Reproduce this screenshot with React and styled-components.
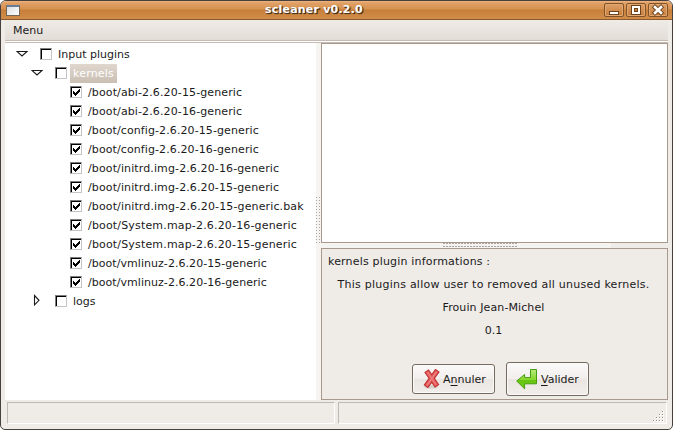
import React from "react";
import styled, { createGlobalStyle } from "styled-components";

const Global = createGlobalStyle`
  * { box-sizing: border-box; }
  html, body { margin: 0; padding: 0; background: #fff; overflow: hidden; }
  body { font: 11px/19px "DejaVu Sans", sans-serif; color: #1a1a1a; }
`;

const Window = styled.div`
  width: 673px;
  height: 430px;
  display: flex;
  flex-direction: column;
  overflow: hidden;
  border: 1px solid #47403c;
  border-radius: 6px 6px 5px 5px;
  background: #efebe7;
`;

const TitleBar = styled.header`
  flex: none;
  height: 19px;
  display: grid;
  grid-template-columns: 66px 1fr 66px;
  align-items: center;
  padding: 0 4px 0 5px;
  border-bottom: 1px solid #8c5a2e;
  background: linear-gradient(#edb682 0, #e0a066 2px, #d6914f 8px, #c77f3a 9px, #cf8c48 17px);
`;

const AppIcon = styled.span`
  width: 14px;
  height: 11px;
  border: 1px solid #75674f;
  border-top: 2px solid #6b7c96;
  background: linear-gradient(135deg, #d9dde0, #fff);
`;

const Title = styled.h1`
  margin: 0;
  font-size: 11px;
  line-height: 18px;
  font-weight: bold;
  letter-spacing: 0.2px;
  text-align: center;
  white-space: nowrap;
  color: #fff;
  text-shadow: 1px 1px 0 #4d3218, 1px 1px 1px #3c2a18;
  padding-right: 46px;
`;

const WindowButtons = styled.div`
  display: flex;
  gap: 2px;
  justify-content: flex-end;
`;

const WindowButton = styled.button`
  width: 20px;
  height: 14px;
  padding: 0;
  display: grid;
  place-items: center;
  border: 1px solid #835225;
  border-radius: 2px;
  background: linear-gradient(#dda069, #c67d39);
  box-shadow: inset 0 0 0 1px #e0a873;
`;

const MenuBar = styled.nav`
  flex: none;
  height: 23px;
  margin: 0 4px;
  padding-left: 8px;
  line-height: 21px;
  background: linear-gradient(#efebe7, #e3ddd8 20px, #c6bcb3 20px, #c6bcb3 21px, #fff 21px, #fff 22px, #c6bcb3 22px);
`;

const Text = styled.span`
  white-space: pre;
  letter-spacing: ${(p) => p.$spacing || 0}px;
`;

const Body = styled.main`
  flex: none;
  height: 357px;
  margin: 0 4px;
  display: grid;
  grid-template-columns: 311px 5px 347px;
`;

const Tree = styled.section`
  background: #fff;
  padding-top: 2px;
`;

const TreeRow = styled.div`
  height: 19px;
  display: flex;
  align-items: flex-start;
  padding-left: ${(p) => 11 + p.$level * 15}px;
`;

const ArrowSlot = styled.span`
  width: 24px;
  height: 19px;
  padding-top: ${(p) => (p.$open ? 4 : 2)}px;
  line-height: 0;
`;

const Box = styled.span`
  width: 12px;
  height: 12px;
  flex: none;
  margin-top: 3px;
  padding: 1px 0 0 1px;
  border: 1px solid #c4c4c4;
  border-top-color: #7d7d7d;
  border-left-color: #7d7d7d;
  background: #fff;
  box-shadow: inset 1px 1px 0 #000;
  line-height: 0;
`;

const RowLabel = styled.span`
  height: 19px;
  margin-left: 3px;
  padding: 0 3px;
  white-space: pre;
  letter-spacing: ${(p) => p.$spacing || 0}px;
  color: ${(p) => (p.$selected ? "#fff" : "#1a1a1a")};
  background: ${(p) => (p.$selected ? "linear-gradient(#dfd6ce, #cabfb3)" : "none")};
`;

const VerticalHandle = styled.div`
  background: #f5f4f1;
  line-height: 0;
  padding-top: 154px;
`;

const RightPane = styled.div`
  display: grid;
  grid-template-rows: 200px 5px 152px;
`;

const Preview = styled.section`
  border: 1px solid #a8998c;
  background: #fff;
`;

const HorizontalHandle = styled.div`
  background: linear-gradient(90deg, #f5f4f1 290px, #efebe7 290px);
  line-height: 0;
  padding-left: 122px;
`;

const Info = styled.section`
  border: 1px solid #a8998c;
  display: flex;
  flex-direction: column;
  background: #efebe7;
`;

const InfoHeading = styled.div`
  height: 24px;
  padding: 3px 0 0 6px;
`;

const InfoLine = styled.div`
  height: 23px;
  padding-right: 2px;
  line-height: 23px;
  text-align: center;
`;

const Actions = styled.div`
  display: flex;
  align-items: center;
  gap: 11px;
  margin: 20px 0 0 90px;
`;

const ActionButton = styled.button`
  width: 83px;
  height: ${(p) => p.$height}px;
  padding: 0 0 0 ${(p) => p.$inset}px;
  display: flex;
  align-items: center;
  gap: ${(p) => p.$gap}px;
  font: inherit;
  color: inherit;
  border: 1px solid #756b60;
  border-radius: 3px;
  background: linear-gradient(#fbfafa, #f1eeec 50%, #eae5e1 51%, #f1eeeb);
  box-shadow: inset 0 0 0 1px #faf9f8;
  u { text-decoration-thickness: 1px; text-underline-offset: 2px; }
`;

const StatusBar = styled.footer`
  flex: none;
  display: flex;
  gap: 3px;
  margin: 2px 4px 0 6px;
`;

const StatusCell = styled.div`
  width: ${(p) => p.$width}px;
  height: 22px;
  display: flex;
  justify-content: flex-end;
  align-items: flex-end;
  border: 1px solid #fff;
  border-top-color: #bdb9b5;
  border-left-color: #bdb9b5;
`;

function Arrow({ open }) {
  return open ? (
    <svg width="13" height="10" viewBox="0 0 13 10">
      <path d="M1 2.5H11L6 7Z" fill="#fff" stroke="#1a1a1a" strokeWidth="1.1" />
    </svg>
  ) : (
    <svg width="13" height="13" viewBox="0 0 13 13">
      <path d="M3.5 1.5V11L8 6.3Z" fill="#fff" stroke="#1a1a1a" strokeWidth="1.1" />
    </svg>
  );
}

function Check({ on }) {
  return (
    <Box>
      {on && (
        <svg width="9" height="9" viewBox="0 0 9 9" shapeRendering="crispEdges">
          <path d="M1 3h1v1h1v1h1v-1h1v-1h1v-1h1v-1h1v3h-1v1h-1v1h-1v1h-1v1h-1v-1h-1v-1h-1z" fill="#000" />
        </svg>
      )}
    </Box>
  );
}

function Dots({ width, height, cols, rows, dot = 1 }) {
  return (
    <svg width={width} height={height} shapeRendering="crispEdges">
      {Array.from({ length: cols * rows }, (_, i) => (
        <rect
          key={i}
          x={(i % cols) * 3}
          y={Math.floor(i / cols) * 3}
          width={dot}
          height="1"
          fill="#a8a5a1"
        />
      ))}
    </svg>
  );
}

function Grip() {
  const dots = [];
  for (let r = 0; r < 4; r++)
    for (let c = 3 - r; c < 4; c++) dots.push([c * 3, r * 3]);
  return (
    <svg width="13" height="12" shapeRendering="crispEdges">
      {dots.map(([x, y]) => (
        <g key={`${x}-${y}`}>
          <rect x={x} y={y} width="2" height="2" fill="#fff" />
          <rect x={x} y={y} width="1" height="1" fill="#8f8a83" />
        </g>
      ))}
    </svg>
  );
}

function CancelIcon() {
  return (
    <svg width="18" height="20" viewBox="0 0 18 20">
      <ellipse cx="8" cy="17.8" rx="7" ry="1.7" fill="#d5d0cb" />
      <g fill="none" strokeLinecap="square">
        <path d="M5 4L12.6 15M13 3.5L4.4 15.5" stroke="#bd2c2c" strokeWidth="5.4" />
        <path d="M5 4L12.6 15M13 3.5L4.4 15.5" stroke="#e55c5c" strokeWidth="3.5" />
        <path d="M5 4L12.6 15M13 3.5L4.4 15.5" stroke="#ee8080" strokeWidth="1.3" />
      </g>
    </svg>
  );
}

function ApplyIcon() {
  return (
    <svg width="22" height="22" viewBox="0 0 22 22">
      <defs>
        <linearGradient id="leaf" x1="0" y1="0" x2="0" y2="1">
          <stop offset="0" stopColor="#b6e87c" />
          <stop offset="0.55" stopColor="#86d62c" />
          <stop offset="0.56" stopColor="#67c411" />
          <stop offset="1" stopColor="#70cc12" />
        </linearGradient>
      </defs>
      <path d="M14.5 1.5H20.5V15.8H8.6V20.8L.7 13L8.6 6.5V9.6H14.5Z" fill="url(#leaf)" stroke="#459d0b" strokeLinejoin="round" />
    </svg>
  );
}

const files = [
  ["abi-2.6.20-15-generic", 0.12],
  ["abi-2.6.20-16-generic", 0.12],
  ["config-2.6.20-15-generic", 0.1],
  ["config-2.6.20-16-generic", 0.1],
  ["initrd.img-2.6.20-16-generic", 0.12],
  ["initrd.img-2.6.20-15-generic", 0.12],
  ["initrd.img-2.6.20-15-generic.bak", 0.13],
  ["System.map-2.6.20-16-generic", 0.17],
  ["System.map-2.6.20-15-generic", 0.17],
  ["vmlinuz-2.6.20-15-generic", 0.05],
  ["vmlinuz-2.6.20-16-generic", 0.05],
];

const rows = [
  { label: "Input plugins", level: 0, arrow: "open" },
  { label: "kernels", level: 1, arrow: "open", selected: true, spacing: 0.2 },
  ...files.map(([name, spacing]) => ({ label: `/boot/${name}`, level: 2, checked: true, spacing })),
  { label: "logs", level: 1, arrow: "closed" },
];

export default function App() {
  return (
    <>
      <Global />
      <Window>
        <TitleBar>
          <AppIcon />
          <Title>scleaner v0.2.0</Title>
          <WindowButtons>
            <WindowButton aria-label="Minimize">
              <svg width="12" height="12" shapeRendering="crispEdges">
                <rect x="1" y="7" width="10" height="4" fill="#6c431d" />
                <rect x="2" y="8" width="8" height="2" fill="#fff" />
              </svg>
            </WindowButton>
            <WindowButton aria-label="Maximize">
              <svg width="12" height="12" shapeRendering="crispEdges">
                <path d="M1 1H11V11H1Z" fill="#6c431d" />
                <path d="M2 2H10V10H2Z" fill="#fff" />
                <path d="M4 4H8V8H4Z" fill="#6c431d" />
                <path d="M5 5H7V7H5Z" fill="#c8803c" />
              </svg>
            </WindowButton>
            <WindowButton aria-label="Close">
              <svg width="12" height="12">
                <path d="M3 3.2L9 8.8M9 3.2L3 8.8" stroke="#6c431d" strokeWidth="4.4" strokeLinecap="square" />
                <path d="M3 3.2L9 8.8M9 3.2L3 8.8" stroke="#fff" strokeWidth="2.6" strokeLinecap="square" />
              </svg>
            </WindowButton>
          </WindowButtons>
        </TitleBar>
        <MenuBar>
          <Text>Menu</Text>
        </MenuBar>
        <Body>
          <Tree>
            {rows.map((r) => (
              <TreeRow key={r.label} $level={r.level}>
                <ArrowSlot $open={r.arrow === "open"}>{r.arrow && <Arrow open={r.arrow === "open"} />}</ArrowSlot>
                <Check on={r.checked} />
                <RowLabel $selected={r.selected} $spacing={r.spacing}>{r.label}</RowLabel>
              </TreeRow>
            ))}
          </Tree>
          <VerticalHandle>
            <Dots width={4} height={50} cols={2} rows={16} />
          </VerticalHandle>
          <RightPane>
            <Preview />
            <HorizontalHandle>
              <Dots width={76} height={5} cols={25} rows={2} dot={2} />
            </HorizontalHandle>
            <Info>
              <InfoHeading><Text $spacing={0.18}>kernels plugin informations :</Text></InfoHeading>
              <InfoLine><Text $spacing={0.24}>This plugins allow user to removed all unused kernels.</Text></InfoLine>
              <InfoLine><Text $spacing={0.1}>Frouin Jean-Michel</Text></InfoLine>
              <InfoLine><Text>0.1</Text></InfoLine>
              <Actions>
                <ActionButton $height={30} $inset={10} $gap={2}>
                  <CancelIcon />
                  <Text>A<u>n</u>nuler</Text>
                </ActionButton>
                <ActionButton $height={34} $inset={9} $gap={3}>
                  <ApplyIcon />
                  <Text><u>V</u>alider</Text>
                </ActionButton>
              </Actions>
            </Info>
          </RightPane>
        </Body>
        <StatusBar>
          <StatusCell $width={328} />
          <StatusCell $width={329}><Grip /></StatusCell>
        </StatusBar>
      </Window>
    </>
  );
}
